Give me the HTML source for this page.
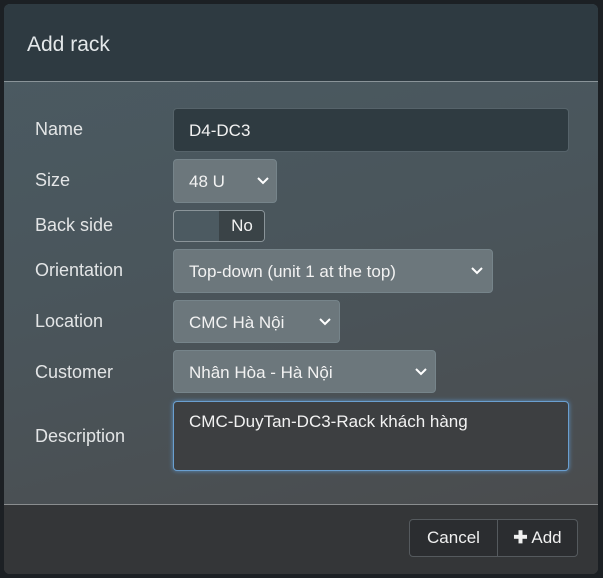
<!DOCTYPE html>
<html><head><style>
body{margin:0;width:603px;height:578px;background:#1c2024;font-family:"Liberation Sans",sans-serif;overflow:hidden;position:relative}
.dlg{position:absolute;left:4px;top:4px;width:594px;height:570px;border-radius:6px;overflow:hidden;background:linear-gradient(165deg,#4b5b63 0%,#4a555b 45%,#4a4a4b 100%)}
.hdr{height:77px;background:#2e3a41;border-bottom:1px solid #8a9499}
.hdr span{position:absolute;left:23px;top:29px;font-size:21px;color:#e4e8ea}
.ftr{position:absolute;left:0;top:500px;width:594px;height:70px;background:#343638;border-top:1px solid #8a8d8f}
.lbl{position:absolute;left:31px;font-size:18px;color:#e3e5e6}
.ctl{position:absolute;left:169px;box-sizing:border-box;border-radius:4px;font-size:17px;color:#f2f2f2}
.inp{background:#2f3b41;border:1px solid #56636a}
.sel{background:#6c777c;border:1px solid #76848a}
.sel span{position:absolute;left:15px;top:12px}
.sel svg{position:absolute;top:16px}
.btn{position:absolute;top:515px;height:38px;box-sizing:border-box;border:1px solid #555a5e;background:#2b2d30;color:#f0f0f0;font-size:17px;line-height:36px;text-align:center}
</style></head><body>
<div class="dlg">
<div class="hdr"><span>Add rack</span></div>
<div class="lbl" style="top:115px">Name</div>
<div class="ctl inp" style="top:104px;width:396px;height:44px"><span style="position:absolute;left:15px;top:12px">D4-DC3</span></div>
<div class="lbl" style="top:166px">Size</div>
<div class="ctl sel" style="top:155px;width:104px;height:44px"><span>48 U</span><svg style="left:82px" width="14" height="10"><path d="M2 2l5 5 5-5" stroke="#fff" stroke-width="2" fill="none"/></svg></div>
<div class="lbl" style="top:211px">Back side</div>
<div class="ctl" style="top:206px;width:92px;height:32px;border:1px solid #8a9499;background:#4c5a61;overflow:hidden"><div style="position:absolute;left:45px;top:0;width:46px;height:30px;background:#3a4347;text-align:center;line-height:30px">No</div></div>
<div class="lbl" style="top:256px">Orientation</div>
<div class="ctl sel" style="top:245px;width:320px;height:44px"><span>Top-down (unit 1 at the top)</span><svg style="left:296px" width="14" height="10"><path d="M2 2l5 5 5-5" stroke="#fff" stroke-width="2" fill="none"/></svg></div>
<div class="lbl" style="top:307px">Location</div>
<div class="ctl sel" style="top:296px;width:167px;height:43px"><span>CMC Hà Nội</span><svg style="left:144px" width="14" height="10"><path d="M2 2l5 5 5-5" stroke="#fff" stroke-width="2" fill="none"/></svg></div>
<div class="lbl" style="top:358px">Customer</div>
<div class="ctl sel" style="top:346px;width:263px;height:43px"><span>Nhân Hòa - Hà Nội</span><svg style="left:240px" width="14" height="10"><path d="M2 2l5 5 5-5" stroke="#fff" stroke-width="2" fill="none"/></svg></div>
<div class="lbl" style="top:422px">Description</div>
<div class="ctl" style="top:397px;width:396px;height:70px;background:#3d3f41;border:1px solid #6a9fd0;box-shadow:0 0 5px #5a8fc0"><span style="position:absolute;left:15px;top:10px">CMC-DuyTan-DC3-Rack khách hàng</span></div>
<div class="ftr"></div>
<div class="btn" style="left:405px;width:89px;border-radius:4px 0 0 4px">Cancel</div>
<div class="btn" style="left:493px;width:81px;border-radius:0 4px 4px 0"><b>✚</b> Add</div>
</div>
</body></html>
